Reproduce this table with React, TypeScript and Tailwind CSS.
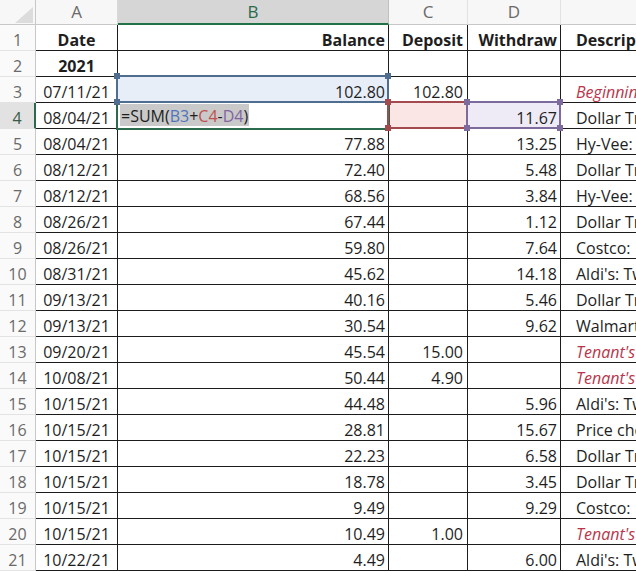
import React from "react";

type Row = {
  d: string;
  b?: string;
  c?: string;
  w?: string;
  e: string;
  red?: boolean;
};

const rows: Row[] = [
  { d: "07/11/21", b: "102.80", c: "102.80", e: "Beginning balance", red: true },
  { d: "08/04/21", w: "11.67", e: "Dollar Tree" },
  { d: "08/04/21", b: "77.88", w: "13.25", e: "Hy-Vee:" },
  { d: "08/12/21", b: "72.40", w: "5.48", e: "Dollar Tree" },
  { d: "08/12/21", b: "68.56", w: "3.84", e: "Hy-Vee:" },
  { d: "08/26/21", b: "67.44", w: "1.12", e: "Dollar Tree" },
  { d: "08/26/21", b: "59.80", w: "7.64", e: "Costco:" },
  { d: "08/31/21", b: "45.62", w: "14.18", e: "Aldi's: Two" },
  { d: "09/13/21", b: "40.16", w: "5.46", e: "Dollar Tree" },
  { d: "09/13/21", b: "30.54", w: "9.62", e: "Walmart" },
  { d: "09/20/21", b: "45.54", c: "15.00", e: "Tenant's rent", red: true },
  { d: "10/08/21", b: "50.44", c: "4.90", e: "Tenant's rent", red: true },
  { d: "10/15/21", b: "44.48", w: "5.96", e: "Aldi's: Two" },
  { d: "10/15/21", b: "28.81", w: "15.67", e: "Price chopper" },
  { d: "10/15/21", b: "22.23", w: "6.58", e: "Dollar Tree" },
  { d: "10/15/21", b: "18.78", w: "3.45", e: "Dollar Tree" },
  { d: "10/15/21", b: "9.49", w: "9.29", e: "Costco:" },
  { d: "10/15/21", b: "10.49", c: "1.00", e: "Tenant's rent", red: true },
  { d: "10/22/21", b: "4.49", w: "6.00", e: "Aldi's: Two" },
];

const cellBase =
  "flex items-end pb-[2px] leading-none whitespace-nowrap overflow-hidden border-b border-[#1c1c1c]";

function RowHead({ n, active }: { n: number; active?: boolean }) {
  return (
    <div
      className={
        "flex items-end justify-center pb-[2px] leading-none border-b border-r " +
        (active
          ? "bg-[#e2e2e2] text-[#3a5a4a] border-b-[#e1e1e1] border-r-[#2a6b4e] border-r-2"
          : "bg-[#fafafa] text-[#6a6a6a] border-b-[#e3e3e3] border-r-[#c8c8c8]")
      }
    >
      {n}
    </div>
  );
}

function Handle({ x, y, color }: { x: number; y: number; color: string }) {
  return (
    <div
      className="absolute w-[6px] h-[6px]"
      style={{ left: x - 3, top: y - 3, backgroundColor: color }}
    />
  );
}

function RefBox({
  x,
  y,
  w,
  h,
  color,
}: {
  x: number;
  y: number;
  w: number;
  h: number;
  color: string;
}) {
  return (
    <>
      <div
        className="absolute border-2 pointer-events-none"
        style={{ left: x - 1, top: y - 1, width: w + 2, height: h + 2, borderColor: color }}
      />
      <Handle x={x} y={y} color={color} />
      <Handle x={x + w} y={y} color={color} />
      <Handle x={x} y={y + h} color={color} />
      <Handle x={x + w} y={y + h} color={color} />
    </>
  );
}

export default function App() {
  return (
    <div
      className="relative w-[636px] h-[572px] overflow-hidden bg-white text-[16px] text-[#1e1e1e]"
      style={{ fontFamily: '"Open Sans", "Noto Sans", sans-serif' }}
    >
      <div className="grid grid-cols-[36px_82px_271px_79px_93px_1fr] grid-rows-[25px_repeat(21,26px)]">
        {/* header row */}
        <div className="relative bg-[#f7f7f7] border-r border-b border-[#c8c8c8]">
          <svg className="absolute left-[15px] top-[7px]" width="18" height="16" viewBox="0 0 18 16">
            <polygon points="18,0 18,16 0,16" fill="#dcdcdc" />
          </svg>
        </div>
        <div className="flex items-center justify-center bg-[#f7f7f7] text-[#6a6a6a] border-r border-[#d8d8d8] border-b border-b-[#c8c8c8] text-[17px]">
          A
        </div>
        <div className="flex items-center justify-center bg-[#d6d6d6] text-[#2a6a4a] border-r border-[#c0c0c0] border-b-2 border-b-[#217346] text-[17px]">
          B
        </div>
        <div className="flex items-center justify-center bg-[#f7f7f7] text-[#6a6a6a] border-r border-[#e2e2e2] border-b border-b-[#c8c8c8] text-[17px]">
          C
        </div>
        <div className="flex items-center justify-center bg-[#f7f7f7] text-[#6a6a6a] border-r border-[#e2e2e2] border-b border-b-[#c8c8c8] text-[17px]">
          D
        </div>
        <div className="bg-[#f7f7f7] border-b border-[#c8c8c8]" />

        {/* row 1 */}
        <RowHead n={1} />
        <div className={cellBase + " justify-center font-bold border-r"}>Date</div>
        <div className={cellBase + " justify-end pr-[3px] font-bold border-r"}>Balance</div>
        <div className={cellBase + " justify-end pr-[4px] font-bold border-r"}>Deposit</div>
        <div className={cellBase + " justify-end pr-[3px] font-bold border-r"}>Withdraw</div>
        <div className={cellBase + " pl-[15px] font-bold"}>Description</div>

        {/* row 2 */}
        <RowHead n={2} />
        <div className={cellBase + " justify-center font-bold border-r"}>2021</div>
        <div className={cellBase + " border-r"} />
        <div className={cellBase + " border-r"} />
        <div className={cellBase + " border-r"} />
        <div className={cellBase} />

        {rows.map((r, i) => {
          const n = i + 3;
          const isB3 = n === 3;
          const isR4 = n === 4;
          return (
            <React.Fragment key={n}>
              <RowHead n={n} active={isR4} />
              <div className={cellBase + " justify-center border-r"}>{r.d}</div>
              {isR4 ? (
                <div className={cellBase + " border-r bg-white pl-[2px]"}>
                  <span className="bg-[#c9c9c9] h-[22px] flex items-end pb-[2px] pl-[1px] pr-[1px]">
                    <span>=SUM(</span>
                    <span className="text-[#4f74b9]">B3</span>
                    <span>+</span>
                    <span className="text-[#c0504d]">C4</span>
                    <span>-</span>
                    <span className="text-[#8064a2]">D4</span>
                    <span>)</span>
                  </span>
                </div>
              ) : (
                <div
                  className={
                    cellBase +
                    " justify-end pr-[3px] border-r " +
                    (isB3 ? "bg-[#e8eef8]" : "")
                  }
                >
                  {r.b}
                </div>
              )}
              <div
                className={
                  cellBase + " justify-end pr-[4px] border-r " + (isR4 ? "bg-[#fbe6e6]" : "")
                }
              >
                {r.c}
              </div>
              <div
                className={
                  cellBase + " justify-end pr-[3px] border-r " + (isR4 ? "bg-[#efebf6]" : "")
                }
              >
                {r.w}
              </div>
              <div
                className={
                  cellBase + " pl-[15px] " + (r.red ? "italic text-[#b8354a]" : "")
                }
              >
                {r.e}
              </div>
            </React.Fragment>
          );
        })}
      </div>

      {/* active cell B4 */}
      <div className="absolute left-[116px] top-[101px] w-[274px] h-[29px] border-2 border-[#2a6b4e] pointer-events-none" />
      {/* reference boxes */}
      <RefBox x={117} y={76} w={271} h={26} color="#4f6e8f" />
      <RefBox x={388} y={102} w={79} h={26} color="#a24a4e" />
      <RefBox x={467} y={102} w={93} h={26} color="#7e6b9e" />
    </div>
  );
}
